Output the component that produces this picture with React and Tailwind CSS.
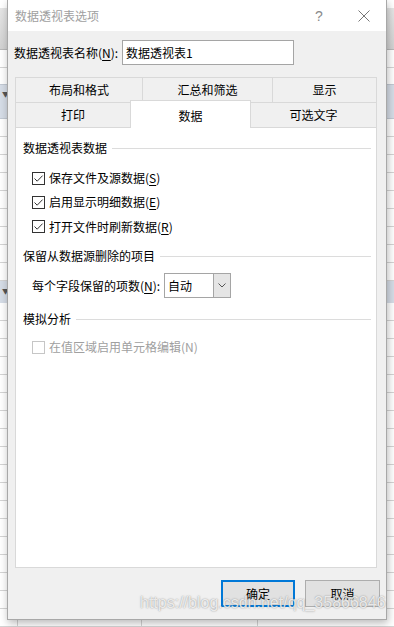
const CJK = '[font-family:"Noto_Sans_CJK_SC","Noto_Sans",sans-serif]';

// Checkbox rows shown in the first section
const DATA_OPTIONS = [
  { text: '保存文件及源数据', key: 'S', h: 'h-[24px]' },
  { text: '启用显示明细数据', key: 'E', h: 'h-[24px]' },
  { text: '打开文件时刷新数据', key: 'R', h: 'h-[25px]' },
];

// Two rows of tabs — widths match the dialog's tab strip
const TAB_ROW_1 = [
  { label: '布局和格式', w: 'w-[128px]' },
  { label: '汇总和筛选', w: 'w-[130px]' },
  { label: '显示',       w: 'w-[104px]' },
];

const TAB_ROW_2 = [
  { label: '打印',     w: 'w-[115px]' },
  { label: '数据',     w: 'w-[121px]', active: true },
  { label: '可选文字', w: 'w-[126px]' },
];

const Checkbox = ({ checked, disabled }) => (
  <span
    className={`flex items-center justify-center w-[13px] h-[13px] bg-white border ${
      disabled ? 'border-[#c6c6c6]' : 'border-[#333333]'
    }`}
  >
    {checked && (
      <svg width="11" height="11" viewBox="0 0 11 11" fill="none">
        <path d="M1.5 5.5 L4.2 8.2 L9.6 2.6" stroke="#333" strokeWidth="1" />
      </svg>
    )}
  </span>
);

// Group caption with a rule running to the right edge
const SectionTitle = ({ children, className = '' }) => (
  <div className={`flex items-center h-[16px] pl-[7px] pr-[5px] ${className}`}>
    <span className="text-[12px] leading-none text-black whitespace-nowrap">{children}</span>
    <div className="flex-1 h-px bg-[#dcdcdc] ml-[5px]" />
  </div>
);

// Excel sheet peeking out behind the dialog
const SheetBackground = () => {
  const rowsA = [...Array(9)];
  const rowsB = [...Array(18)];
  return (
    <div className="flex flex-col w-full h-full bg-white">
      <div className="h-[9px]" />
      <div className="h-[44px] bg-[linear-gradient(to_bottom,#e6e6e6,#d2d2d2)] border-b border-[#b9b9b9]" />
      <div className="h-[19px] border-b border-[#d4d4d4]" />
      <div className="h-[17px]" />
      <div className="h-[37px] bg-[#d6dde7] border-y border-[#c2c9d3] flex items-start pl-[2px] pt-[6px]">
        <span className="text-[7px] leading-none text-[#555]">▼</span>
      </div>
      {rowsA.map((_, i) => (
        <div key={i} className="h-[18px] shrink-0 border-b border-[#d4d4d4]" />
      ))}
      <div className="h-[22px] shrink-0 bg-[#d6dde7] flex items-center pl-[2px]">
        <span className="text-[7px] leading-none text-[#555]">▼</span>
      </div>
      {rowsB.map((_, i) => (
        <div key={i} className="h-[18px] shrink-0 border-b border-[#d4d4d4]" />
      ))}
    </div>
  );
};

export default function App() {
  return (
    <div className={`relative w-[394px] h-[627px] overflow-hidden ${CJK}`}>

      {/* ── Sheet behind ─────────────────────────────────────────────── */}
      <SheetBackground />
      <div className="absolute left-[17px] top-[600px] w-px h-[27px] bg-[#d4d4d4]" />
      <div className="absolute left-[141px] top-[600px] w-px h-[27px] bg-[#d4d4d4]" />
      <div className="absolute left-[257px] top-[600px] w-px h-[27px] bg-[#d4d4d4]" />

      {/* ── Dialog ───────────────────────────────────────────────────── */}
      <div className="absolute left-[7px] top-0 w-[380px] h-[620px] flex flex-col border-x border-b border-[#a8a8a8] shadow-[1px_3px_8px_rgba(0,0,0,0.28)]">

        {/* title bar */}
        <div className="h-[31px] shrink-0 bg-white flex items-center">
          <span className="pl-[7px] text-[12px] leading-none text-[#a0a0a0]">数据透视表选项</span>
          <span className="ml-auto w-[46px] text-center text-[14px] leading-none text-[#8a8a8a] [font-family:'Liberation_Sans',sans-serif]">?</span>
          <span className="w-[44px] flex items-center justify-center">
            <svg width="12" height="12" viewBox="0 0 12 12" fill="none">
              <path d="M0.5 0.5 L11.5 11.5 M11.5 0.5 L0.5 11.5" stroke="#777" strokeWidth="1" />
            </svg>
          </span>
        </div>

        {/* body */}
        <div className="flex-1 flex flex-col bg-[#f0f0f0]">

          {/* name row */}
          <div className="mt-[9px] h-[25px] flex items-center pl-[6px]">
            <span className="w-[108px] text-[12px] leading-none text-black whitespace-nowrap">
              数据透视表名称(<span className="underline underline-offset-2">N</span>):
            </span>
            <div className="w-[172px] h-[25px] bg-white border border-[#a5a5a5] flex items-center pl-[3px]">
              <span className="text-[12px] leading-none text-black">数据透视表1</span>
            </div>
          </div>

          {/* tabs */}
          <div className="mt-[12px] ml-[7px] w-[362px] flex flex-col">
            <div className="flex h-[25px]">
              {TAB_ROW_1.map((t, i) => (
                <div
                  key={t.label}
                  className={`${t.w} h-full flex items-center justify-center border-t border-r border-[#d9d9d9] ${i === 0 ? 'border-l' : ''}`}
                >
                  <span className="text-[12px] leading-none text-black">{t.label}</span>
                </div>
              ))}
            </div>
            <div className="flex h-[25px]">
              {TAB_ROW_2.map((t, i) =>
                t.active ? (
                  <div
                    key={t.label}
                    className={`${t.w} self-start -mt-[2px] h-[28px] relative z-10 bg-white flex items-center justify-center border-t border-x border-[#d9d9d9] pt-[2px]`}
                  >
                    <span className="text-[12px] leading-none text-black">{t.label}</span>
                  </div>
                ) : (
                  <div
                    key={t.label}
                    className={`${t.w} h-full flex items-center justify-center border-t border-[#d9d9d9] ${i === 0 ? 'border-l' : 'border-r'}`}
                  >
                    <span className="text-[12px] leading-none text-black">{t.label}</span>
                  </div>
                )
              )}
            </div>
          </div>

          {/* tab panel */}
          <div className="ml-[7px] w-[362px] h-[441px] bg-white border border-[#d9d9d9] flex flex-col">

            <SectionTitle className="mt-[12px]">数据透视表数据</SectionTitle>
            <div className="mt-[10px] flex flex-col">
              {DATA_OPTIONS.map(o => (
                <div key={o.key} className={`${o.h} flex items-center pl-[16px]`}>
                  <Checkbox checked />
                  <span className="ml-[4px] text-[12px] leading-none text-black">
                    {o.text}(<span className="underline underline-offset-2">{o.key}</span>)
                  </span>
                </div>
              ))}
            </div>

            <SectionTitle className="mt-[9px]">保留从数据源删除的项目</SectionTitle>
            <div className="mt-[9px] h-[25px] flex items-center pl-[16px]">
              <span className="w-[132px] text-[12px] leading-none text-black whitespace-nowrap">
                每个字段保留的项数(<span className="underline underline-offset-2">N</span>):
              </span>
              <div className="w-[67px] h-[25px] border border-[#a5a5a5] bg-white flex">
                <span className="flex-1 flex items-center pl-[3px] text-[12px] leading-none text-black">自动</span>
                <span className="w-[17px] h-full bg-[#e5e5e5] border-l border-[#a5a5a5] flex items-center justify-center">
                  <svg width="8" height="5" viewBox="0 0 8 5" fill="none">
                    <path d="M0.5 0.5 L4 4 L7.5 0.5" stroke="#555" strokeWidth="1" />
                  </svg>
                </span>
              </div>
            </div>

            <SectionTitle className="mt-[13px]">模拟分析</SectionTitle>
            <div className="mt-[8px] h-[24px] flex items-center pl-[16px]">
              <Checkbox disabled />
              <span className="ml-[4px] text-[12px] leading-none text-[#a0a0a0]">在值区域启用单元格编辑(N)</span>
            </div>
          </div>

          {/* buttons */}
          <div className="mt-[12px] h-[27px] flex justify-end gap-[10px] pr-[6px]">
            <button className="w-[74px] h-[27px] bg-[#e1e1e1] border-2 border-[#0078d7] text-[12px] leading-none text-black">
              确定
            </button>
            <button className="w-[75px] h-[27px] bg-[#e1e1e1] border border-[#adadad] text-[12px] leading-none text-black">
              取消
            </button>
          </div>
        </div>
      </div>

      {/* ── Watermark ────────────────────────────────────────────────── */}
      <div className="absolute left-[140px] top-[595px] text-[16px] leading-[16px] whitespace-nowrap text-[rgba(255,255,255,0.8)] [text-shadow:0_0_1.5px_rgba(90,90,90,0.75)] [font-family:'Liberation_Sans',sans-serif]">
        https://blog.csdn.net/qq_35866846
      </div>
    </div>
  );
}
